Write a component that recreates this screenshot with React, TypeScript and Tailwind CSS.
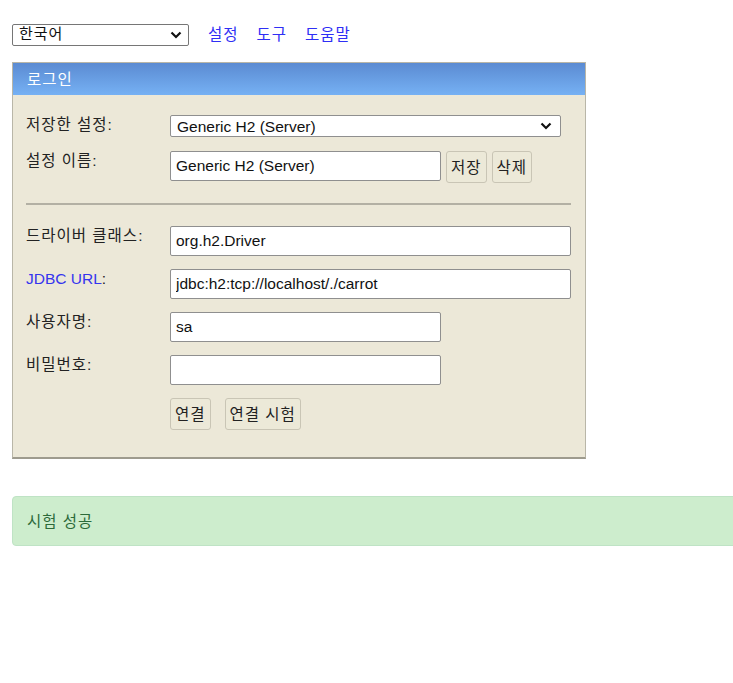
const font = { fontFamily: '"Liberation Sans", Arial, "Noto Sans CJK KR", sans-serif' };

function Btn({ children }: { children: React.ReactNode }) {
  return (
    <button className="h-[32px] px-[4px] border border-[#c9c5b5] rounded-[3px] bg-[#ece9d8] text-[15.5px] tracking-[1px] text-[#222] leading-none">
      {children}
    </button>
  );
}

function Row({
  label,
  blue,
  children,
  className = "",
}: {
  label: string;
  blue?: boolean;
  children: React.ReactNode;
  className?: string;
}) {
  return (
    <div className={"flex items-start " + className}>
      <div
        className={
          "w-[144px] shrink-0 text-[15.5px] leading-[20px] " +
          (blue ? "text-[#3535ee]" : "text-[#222] tracking-[1px]")
        }
      >
        {label}
        {blue ? <span className="text-[#222]">:</span> : ":"}
      </div>
      <div className="flex items-start gap-[5px]">{children}</div>
    </div>
  );
}

function TextInput({ value, wide }: { value: string; wide?: boolean }) {
  return (
    <input
      readOnly
      value={value}
      className={
        "h-[30px] px-[5px] bg-white border border-[#8f8f8f] rounded-[2px] text-[15.5px] text-[#111] outline-none " +
        (wide ? "w-[401px]" : "w-[271px]")
      }
    />
  );
}

function Chevron() {
  return (
    <svg width="12" height="8" viewBox="0 0 12 8" className="shrink-0">
      <path d="M1.5 1.5 L6 6 L10.5 1.5" fill="none" stroke="#111" strokeWidth="2.2" />
    </svg>
  );
}

export default function App() {
  return (
    <div className="w-[733px] h-[683px] overflow-hidden bg-white pt-[23px]" style={font}>
      <div className="flex items-center pl-[12px]">
        <div className="w-[177px] h-[22px] flex items-center justify-between px-[6px] bg-white border border-[#767676] rounded-[2px] text-[15px] tracking-[1px] text-[#111]">
          <span>한국어</span>
          <Chevron />
        </div>
        <div className="flex gap-[18px] ml-[19px] text-[15.5px] tracking-[1px] text-[#2f2ff5]">
          <span>설정</span>
          <span>도구</span>
          <span>도움말</span>
        </div>
      </div>

      <div className="ml-[12px] mt-[16px] w-[574px] border border-[#b9b6a8] border-b-2 border-b-[#9e9b8e] bg-[#ece8d8]">
        <div className="h-[32px] flex items-center pl-[14px] bg-gradient-to-b from-[#5b8bd2] to-[#76b1f4] text-white text-[15.5px] tracking-[1px]">
          로그인
        </div>
        <div className="pl-[13px] pr-[13px] pt-[20px] pb-[27px]">
          <Row label="저장한 설정">
            <div className="w-[391px] h-[22px] flex items-center justify-between pl-[6px] pr-[8px] bg-white border border-[#8f8f8f] rounded-[2px] text-[15.5px] text-[#111]">
              <span>Generic H2 (Server)</span>
              <Chevron />
            </div>
          </Row>
          <Row label="설정 이름" className="mt-[14px]">
            <TextInput value="Generic H2 (Server)" />
            <Btn>저장</Btn>
            <Btn>삭제</Btn>
          </Row>
          <hr className="mt-[20px] mb-[21px] border-t-2 border-[#b3b0a4] w-[545px]" />
          <div className="flex flex-col gap-[13px]">
            <Row label="드라이버 클래스">
              <TextInput value="org.h2.Driver" wide />
            </Row>
            <Row label="JDBC URL" blue>
              <TextInput value="jdbc:h2:tcp://localhost/./carrot" wide />
            </Row>
            <Row label="사용자명">
              <TextInput value="sa" />
            </Row>
            <Row label="비밀번호">
              <TextInput value="" />
            </Row>
            <div className="flex gap-[14px] pl-[144px]">
              <Btn>연결</Btn>
              <Btn>연결 시험</Btn>
            </div>
          </div>
        </div>
      </div>

      <div className="ml-[12px] mt-[37px] w-[740px] h-[50px] flex items-center pl-[14px] bg-[#cdedcd] border border-[#bfe3c5] rounded-[4px] text-[#2c6a3a] text-[15.5px] tracking-[1px]">
        시험 성공
      </div>
    </div>
  );
}
